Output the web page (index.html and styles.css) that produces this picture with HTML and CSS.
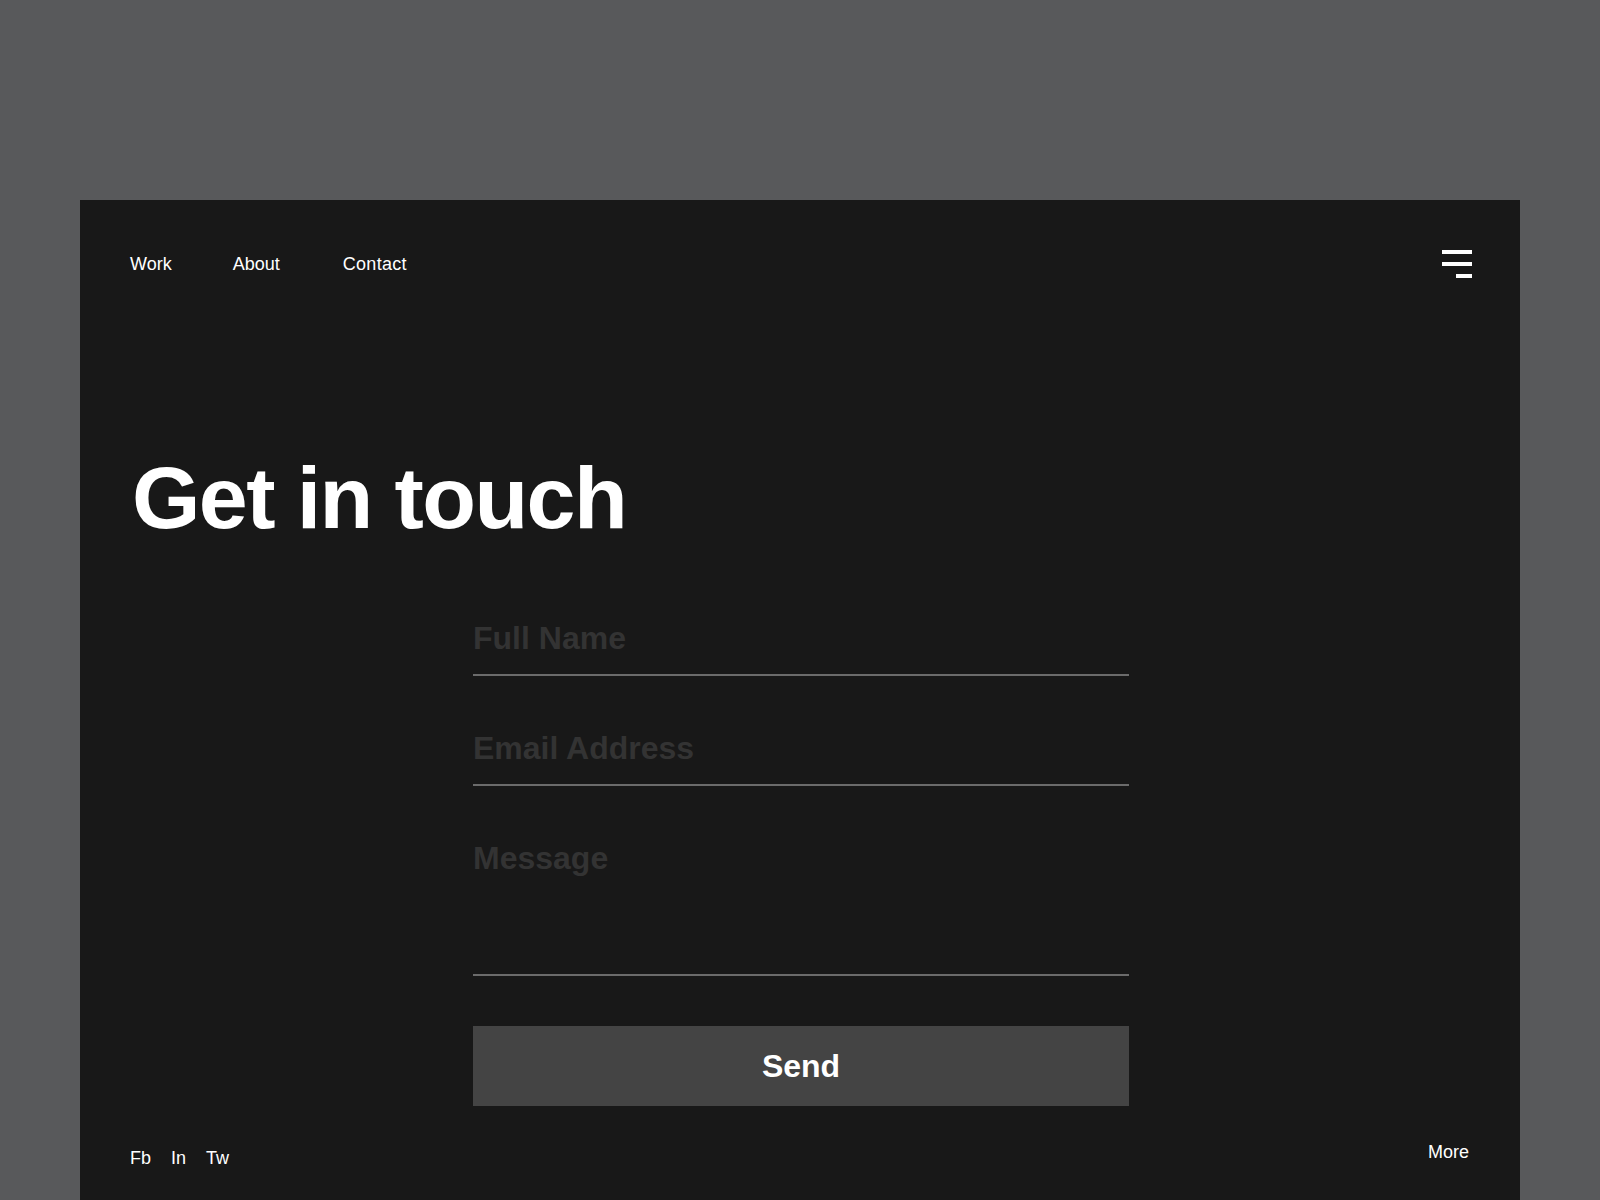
FILE: index.html
```html
<!DOCTYPE html>
<html lang="en">
<head>
<meta charset="utf-8">
<title>Get in touch</title>
<link rel="stylesheet" href="styles.css">
</head>
<body>
<main class="card">
  <header class="topbar">
    <nav class="nav">
      <a href="#" class="nav-link">Work</a>
      <a href="#" class="nav-link">About</a>
      <a href="#" class="nav-link">Contact</a>
    </nav>
    <button class="menu" aria-label="Menu">
      <span class="bar bar-long"></span>
      <span class="bar bar-long"></span>
      <span class="bar bar-short"></span>
    </button>
  </header>

  <h1 class="title">Get in touch</h1>

  <form class="form">
    <input class="field" type="text" placeholder="Full Name">
    <input class="field" type="email" placeholder="Email Address">
    <textarea class="field field-message" placeholder="Message"></textarea>
    <button type="button" class="send">Send</button>
  </form>

  <footer class="footer">
    <div class="social">
      <a href="#" class="foot-link">Fb</a>
      <a href="#" class="foot-link">In</a>
      <a href="#" class="foot-link">Tw</a>
    </div>
    <a href="#" class="foot-link more">More</a>
  </footer>
</main>
</body>
</html>
```

FILE: styles.css
```css
* { box-sizing: border-box; }

html, body {
  margin: 0;
  padding: 0;
}

body {
  background: #58595b;
  font-family: "Liberation Sans", Arial, Helvetica, sans-serif;
  color: #ffffff;
  overflow: hidden;
}

.card {
  margin: 200px 0 0 80px;
  width: 1440px;
  height: 1000px;
  background: #181818;
  padding: 50px 48px 0 50px;
  display: flex;
  flex-direction: column;
}

.topbar {
  display: flex;
  justify-content: space-between;
  align-items: center;
  height: 28px;
}

.nav {
  display: flex;
  gap: 61px;
}

.nav-link {
  color: #ffffff;
  text-decoration: none;
  font-size: 18px;
  line-height: 20px;
}

.nav-link:last-child {
  margin-left: 2px;
  letter-spacing: 0.3px;
}

.menu {
  display: flex;
  flex-direction: column;
  align-items: flex-end;
  gap: 8px;
  width: 30px;
  height: 28px;
  padding: 0;
  border: 0;
  background: transparent;
  cursor: pointer;
}

.bar {
  display: block;
  height: 4px;
  background: #ffffff;
}

.bar-long { width: 30px; }
.bar-short { width: 16px; }

.title {
  margin: 176px 0 0 2px;
  font-size: 88px;
  line-height: 88px;
  font-weight: 700;
  letter-spacing: -1.6px;
  color: #ffffff;
}

.form {
  align-self: center;
  width: 656px;
  margin-top: 76px;
  display: flex;
  flex-direction: column;
  gap: 52px;
}

.field {
  display: block;
  width: 100%;
  height: 58px;
  padding: 0 0 16px 0;
  border: 0;
  border-bottom: 2px solid #6b6b6b;
  border-radius: 0;
  background: transparent;
  color: #ffffff;
  font-family: "Liberation Sans", Arial, Helvetica, sans-serif;
  font-size: 32px;
  font-weight: 700;
  line-height: 40px;
  outline: none;
}

.field::placeholder {
  color: #333333;
  opacity: 1;
}

.field-message {
  height: 138px;
  resize: none;
  overflow: hidden;
}

.send {
  margin-top: -2px;
  height: 80px;
  width: 100%;
  border: 0;
  border-radius: 0;
  background: #444444;
  color: #ffffff;
  font-family: "Liberation Sans", Arial, Helvetica, sans-serif;
  font-size: 32px;
  font-weight: 700;
  cursor: pointer;
}

.footer {
  margin-top: 36px;
  display: flex;
  justify-content: space-between;
  align-items: flex-start;
}

.social {
  display: flex;
  gap: 20px;
  padding-top: 6px;
}

.foot-link {
  color: #ffffff;
  text-decoration: none;
  font-size: 18px;
  line-height: 20px;
}

.more {
  margin-right: 3px;
}
```
